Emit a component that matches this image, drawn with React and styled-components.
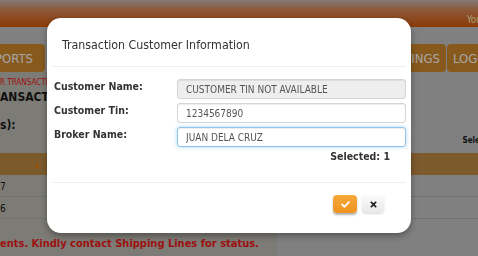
import React from "react";
import styled, { createGlobalStyle } from "styled-components";
import { FaCheck, FaTimes } from "react-icons/fa";

const GlobalStyle = createGlobalStyle`
  html, body { margin: 0; padding: 0; }
  body {
    background: #c5c5c5;
    font-family: "DejaVu Sans Condensed", "DejaVu Sans", Verdana, sans-serif;
    overflow: hidden;
  }
`;

export default function App() {
  return (
    <>
      <GlobalStyle />
      <Page>
        <Header>
          <Welcome>You</Welcome>
        </Header>
        <Nav>
          <NavButton first>PORTS</NavButton>
          <NavRight>
            <NavButton>SETTINGS</NavButton>
            <NavButton last>LOGOUT</NavButton>
          </NavRight>
        </Nav>
        <Content>
          <Crumb>R TRANSACTION LIST</Crumb>
          <PageTitle>ANSACTION</PageTitle>
          <SubTitle>s):</SubTitle>
          <SelCount>Selected: 1</SelCount>
          <TableHead>
            <SortArrow>▲</SortArrow>
          </TableHead>
          <Row>7</Row>
          <Row>6</Row>
          <Notice>ents. Kindly contact Shipping Lines for status.</Notice>
        </Content>
      </Page>

      <Overlay>
        <Modal>
          <ModalHeader>
            <Title>Transaction Customer Information</Title>
          </ModalHeader>
          <ModalBody>
            <Form>
              <Label>Customer Name:</Label>
              <Input disabled defaultValue="CUSTOMER TIN NOT AVAILABLE" />
              <Label>Customer Tin:</Label>
              <Input defaultValue="1234567890" />
              <Label>Broker Name:</Label>
              <Input focused defaultValue="JUAN DELA CRUZ" />
            </Form>
            <Selected>Selected: 1</Selected>
          </ModalBody>
          <ModalFooter>
            <ActionButton primary>
              <FaCheck />
            </ActionButton>
            <ActionButton>
              <FaTimes />
            </ActionButton>
          </ModalFooter>
        </Modal>
      </Overlay>
    </>
  );
}

const Page = styled.div`
  width: 478px;
  height: 256px;
  overflow: hidden;
`;

const Header = styled.div`
  height: 27px;
  background: linear-gradient(#c8baba 0%, #d88a5a 35%, #d65909 100%);
  display: flex;
  justify-content: flex-end;
  align-items: flex-end;
  padding-bottom: 2px;
  box-sizing: border-box;
`;

const Welcome = styled.span`
  font-size: 10px;
  color: #fff0b0;
  margin-right: -4px;
`;

const Nav = styled.div`
  margin-top: 17px;
  height: 28px;
  display: flex;
  justify-content: space-between;
`;

const NavRight = styled.div`
  display: flex;
  gap: 1px;
  margin-right: -29px;
`;

const NavButton = styled.div`
  height: 28px;
  box-sizing: border-box;
  padding: 0 ${(p) => (p.first ? "12px" : "6px")} 0 ${(p) => (p.first ? "0" : "6px")};
  width: ${(p) => (p.first ? "45px" : p.last ? "60px" : "auto")};
  background: #d0892b;
  border-radius: ${(p) => (p.first ? "0 4px 4px 0" : "4px")};
  color: #ffffff;
  font-size: 13px;
  display: flex;
  align-items: center;
  justify-content: ${(p) => (p.first ? "flex-end" : "flex-start")};
  white-space: nowrap;
`;

const Content = styled.div`
  display: flex;
  flex-direction: column;
  height: 184px;
  background: linear-gradient(to right, #bfbdb4 277px, #c5c5c5 277px);
`;

const Crumb = styled.div`
  width: 60px;
  overflow: hidden;
  white-space: nowrap;
  font-size: 8px;
  color: #f01818;
  line-height: 10px;
  margin-top: 6px;
`;

const PageTitle = styled.div`
  width: 60px;
  overflow: hidden;
  white-space: nowrap;
  font-size: 12px;
  font-weight: bold;
  color: #1a1a1a;
  line-height: 14px;
  margin-top: 2px;
`;

const SubTitle = styled.div`
  font-size: 12px;
  font-weight: bold;
  color: #1a1a1a;
  line-height: 14px;
  margin-top: 14px;
`;

const SelCount = styled.div`
  align-self: flex-end;
  font-size: 8px;
  font-weight: bold;
  color: #1a1a1a;
  margin-right: -30px;
  line-height: 10px;
  margin-top: 4px;
`;

const TableHead = styled.div`
  height: 22px;
  margin-top: 7px;
  background: #c08a44;
  display: flex;
  align-items: center;
  padding-left: 35px;
`;

const SortArrow = styled.span`
  font-size: 6px;
  color: #f08000;
`;

const Row = styled.div`
  height: 22px;
  box-sizing: border-box;
  border-bottom: 1px solid #b0b0ac;
  font-size: 10px;
  color: #1a1a1a;
  display: flex;
  align-items: center;
  padding-top: 1px;
`;

const Notice = styled.div`
  font-size: 11px;
  font-weight: bold;
  color: #f01a1a;
  margin-top: 18px;
  white-space: nowrap;
`;

const Overlay = styled.div`
  position: fixed;
  inset: 0;
  background: rgba(0, 0, 0, 0.35);
  padding: 18px 0 0 47px;
`;

const Modal = styled.div`
  width: 364px;
  height: 215px;
  background: #ffffff;
  border-radius: 14px;
  box-shadow: 0 3px 7px rgba(0, 0, 0, 0.35);
  display: flex;
  flex-direction: column;
`;

const ModalHeader = styled.div`
  height: 49px;
  margin: 0 5px;
  padding: 6px 0 0 10px;
  box-sizing: border-box;
  border-bottom: 1px solid #eeeeee;
  display: flex;
  align-items: center;
`;

const Title = styled.h3`
  margin: 0;
  font-size: 12.3px;
  font-weight: normal;
  color: #333333;
`;

const ModalBody = styled.div`
  padding: 12px 5px 0 7px;
  height: 115px;
  box-sizing: border-box;
  display: flex;
  flex-direction: column;
`;

const Form = styled.div`
  display: grid;
  grid-template-columns: 123px 229px;
  grid-auto-rows: 20px;
  row-gap: 4px;
`;

const Label = styled.label`
  font-size: 10.5px;
  font-weight: bold;
  color: #333333;
  padding-top: 1px;
`;

const Input = styled.input`
  box-sizing: border-box;
  height: 20px;
  width: 229px;
  padding: 0 8px;
  font-family: inherit;
  font-size: 10px;
  color: #555555;
  background: ${(p) => (p.disabled ? "#eeeeee" : "#ffffff")};
  border: 1px solid ${(p) => (p.focused ? "#8fc3ea" : "#d4d4d4")};
  border-radius: 3px;
  box-shadow: ${(p) =>
    p.focused
      ? "inset 0 1px 1px rgba(0,0,0,.075), 0 0 4px rgba(82,168,236,.45)"
      : "inset 0 1px 1px rgba(0,0,0,.075)"};
  outline: none;
`;

const Selected = styled.div`
  align-self: flex-end;
  margin: 3px 16px 0 0;
  font-size: 10.5px;
  font-weight: bold;
  color: #333333;
`;

const ModalFooter = styled.div`
  margin: 0 5px;
  border-top: 1px solid #eeeeee;
  padding: 12px 22px 0 0;
  display: flex;
  justify-content: flex-end;
  gap: 5px;
`;

const ActionButton = styled.button`
  width: ${(p) => (p.primary ? "24px" : "22px")};
  height: 18px;
  padding: 0;
  border: none;
  border-radius: 4px;
  display: flex;
  align-items: center;
  justify-content: center;
  font-size: 9px;
  color: ${(p) => (p.primary ? "#ffffff" : "#222222")};
  background: ${(p) =>
    p.primary
      ? "linear-gradient(#f6a93a, #ee9320)"
      : "linear-gradient(#fbfbfb, #e8e8e8)"};
  box-shadow: ${(p) =>
    p.primary ? "0 2px 2px rgba(0,0,0,.3)" : "0 1px 2px rgba(0,0,0,.15)"};
`;
